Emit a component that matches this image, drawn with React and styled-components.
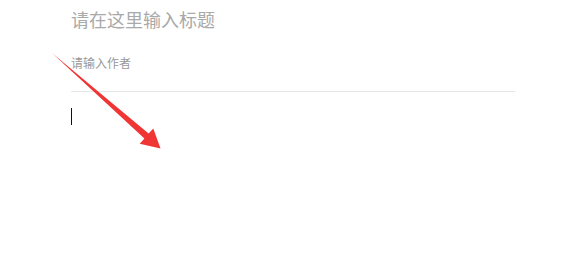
import React from 'react';
import styled, { createGlobalStyle } from 'styled-components';

const GlobalStyle = createGlobalStyle`
  html, body {
    margin: 0;
    padding: 0;
    background: #fff;
  }
  body {
    font-family: "Noto Sans CJK SC", "Microsoft YaHei", sans-serif;
  }
`;

const Page = styled.div`
  position: relative;
  width: 585px;
  height: 261px;
  overflow: hidden;
`;

const Editor = styled.div`
  width: 444px;
  padding: 10px 0 0 71px;
  display: flex;
  flex-direction: column;
`;

const Title = styled.div`
  font-size: 18px;
  line-height: 18px;
  height: 18px;
  color: #a9a9a9;
`;

const Author = styled.div`
  margin-top: 29px;
  font-size: 12px;
  line-height: 12px;
  color: #999;
  padding-bottom: 22px;
  border-bottom: 1px solid #e6e6e6;
`;

const Body = styled.div`
  padding-top: 16px;
  height: 40px;
`;

const Caret = styled.span`
  display: block;
  width: 1px;
  height: 17px;
  background: #111;
`;

const ArrowLayer = styled.svg`
  position: absolute;
  left: 0;
  top: 0;
  pointer-events: none;
`;

export default function App() {
  return (
    <>
      <GlobalStyle />
      <Page>
        <Editor>
          <Title>请在这里输入标题</Title>
          <Author>请输入作者</Author>
          <Body>
            <Caret />
          </Body>
        </Editor>
        <ArrowLayer width="585" height="261" viewBox="0 0 585 261">
          <polygon
            points="52,53 148.6,133.6 153.3,128.4 160.5,148.5 139.7,143.8 144.4,138.4"
            fill="#f03535"
          />
        </ArrowLayer>
      </Page>
    </>
  );
}
